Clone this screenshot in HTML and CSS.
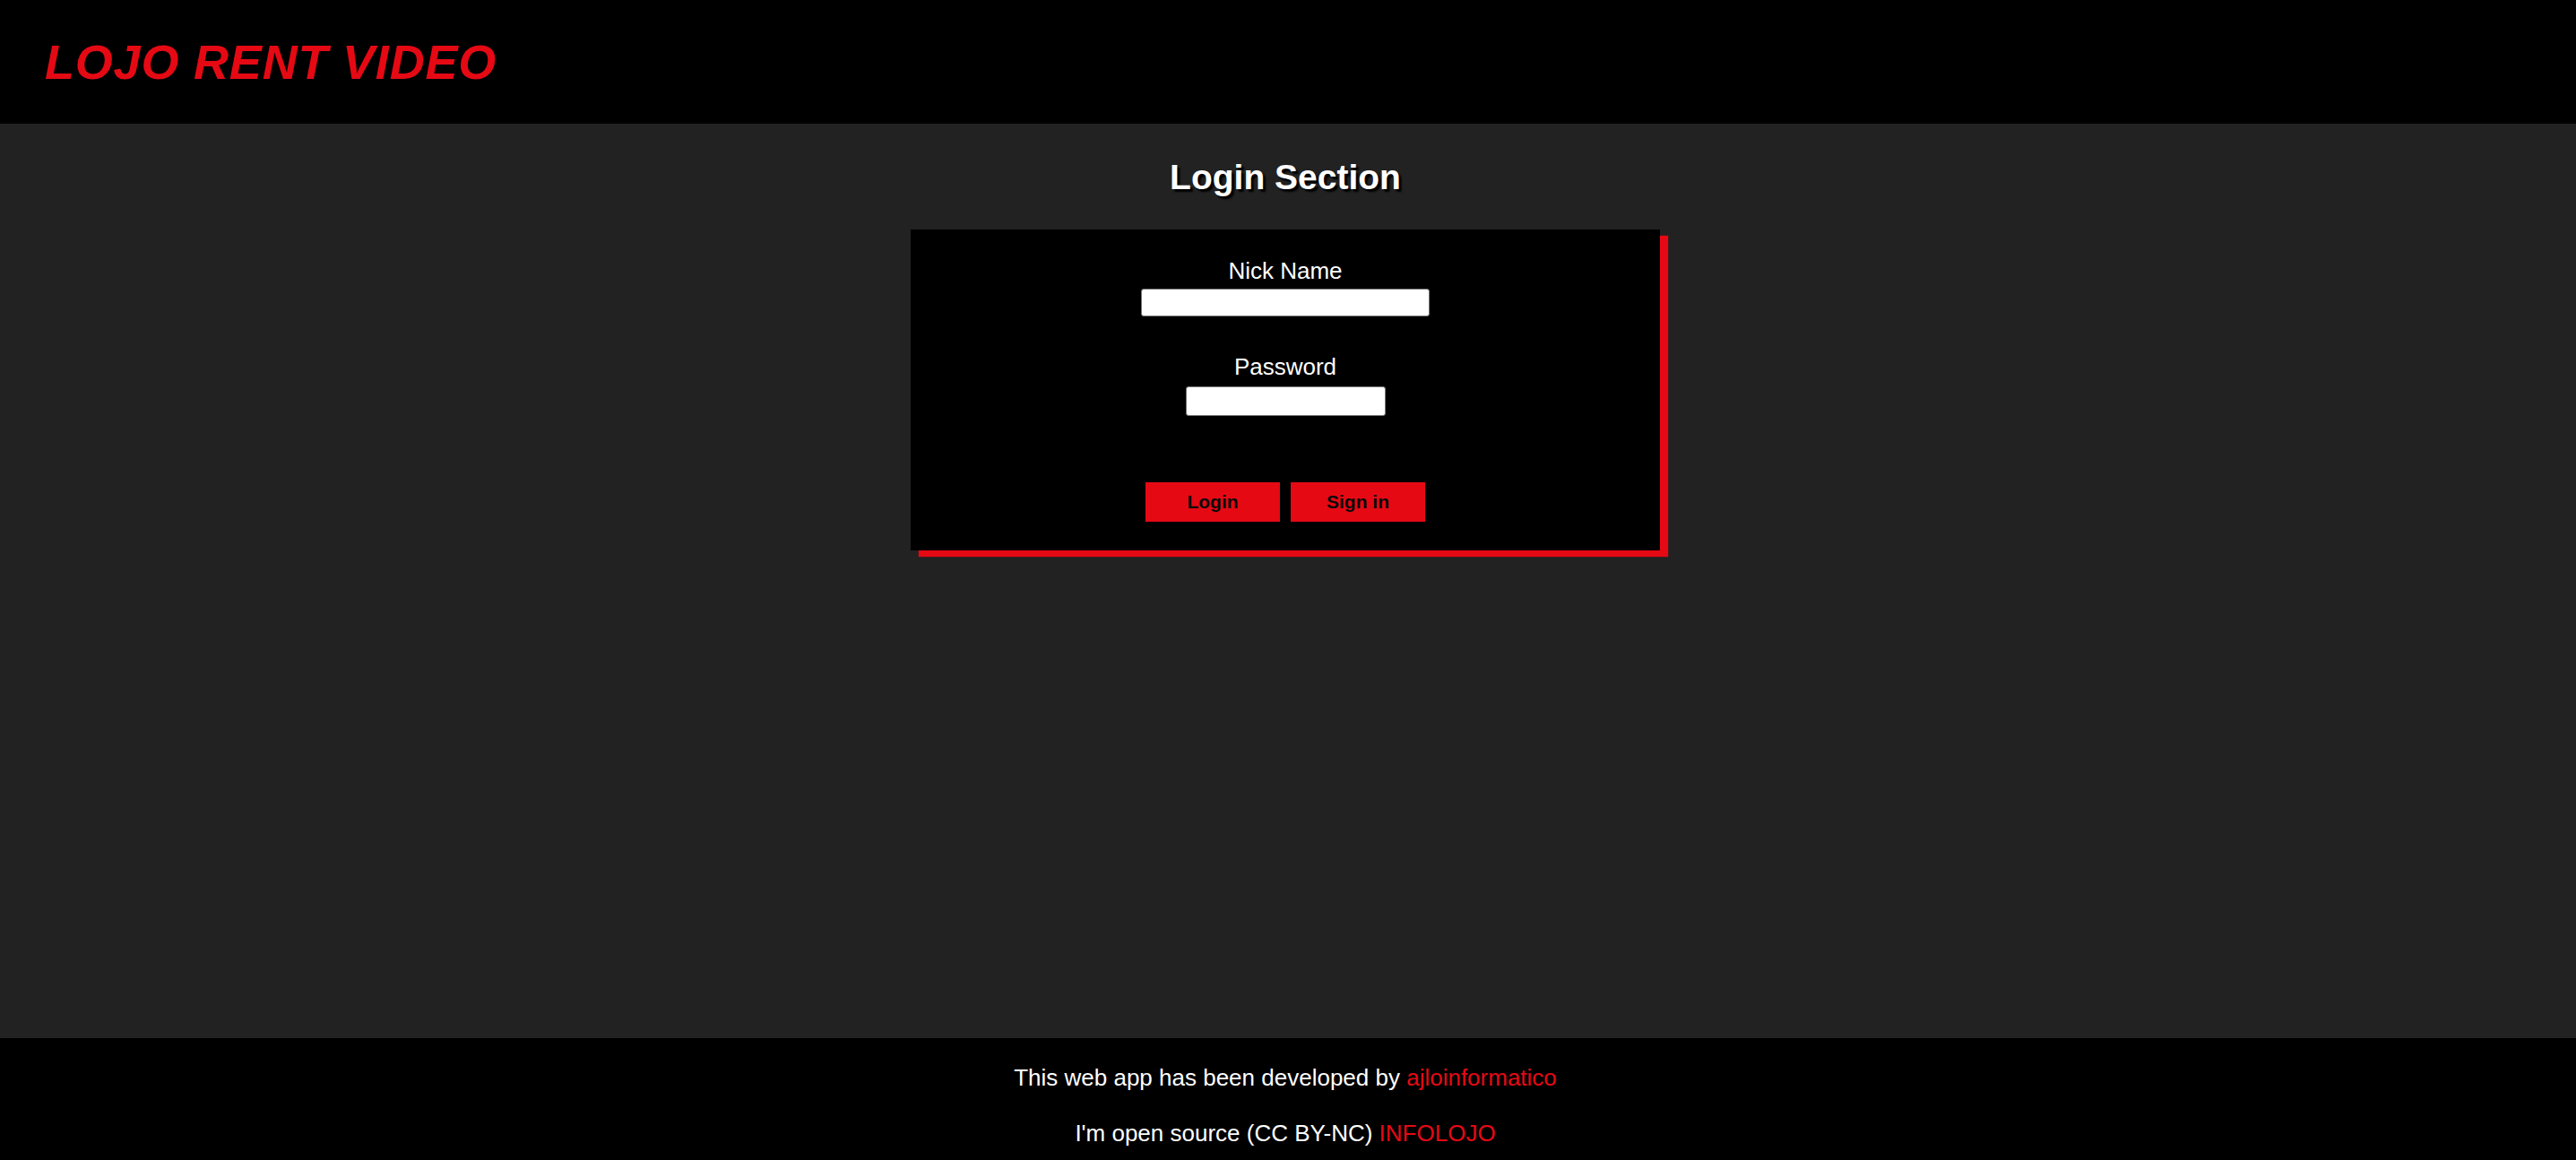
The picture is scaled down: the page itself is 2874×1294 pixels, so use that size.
FILE: index.html
```html
<!DOCTYPE html>
<html lang="en">
<head>
<meta charset="utf-8">
<title>Lojo Rent Video</title>
<link rel="stylesheet" href="styles.css">
</head>
<body>
<div class="page">
  <header class="site-header">
    <h1 class="brand">LOJO RENT VIDEO</h1>
  </header>
  <main class="site-main">
    <h2 class="section-title">Login Section</h2>
    <form class="login-box">
      <label class="field-label" for="nick">Nick Name</label>
      <input class="field-input input-nick" id="nick" type="text">
      <label class="field-label label-pass" for="pass">Password</label>
      <input class="field-input input-pass" id="pass" type="password">
      <div class="actions">
        <button class="btn" type="button">Login</button>
        <button class="btn" type="button">Sign in</button>
      </div>
    </form>
  </main>
  <footer class="site-footer">
    <p class="footer-line">This web app has been developed by <a class="footer-link" href="#">ajloinformatico</a></p>
    <p class="footer-line second">I'm open source (CC BY-NC) <a class="footer-link" href="#">INFOLOJO</a></p>
  </footer>
</div>
</body>
</html>
```

FILE: styles.css
```css
html, body {
  margin: 0;
  padding: 0;
  height: 100%;
  overflow: hidden;
}

body {
  font-family: "Liberation Sans", Arial, Helvetica, sans-serif;
  background: #222222;
  color: #ffffff;
}

.page {
  display: flex;
  flex-direction: column;
  height: 100vh;
}

.site-header {
  height: 138px;
  flex: 0 0 138px;
  background: #000000;
  display: flex;
  align-items: center;
  padding-left: 50px;
}

.brand {
  margin: 0;
  font-size: 54px;
  font-weight: bold;
  font-style: italic;
  letter-spacing: 0.8px;
  line-height: 62px;
  color: #e50914;
}

.site-main {
  flex: 1 1 auto;
  background: #222222;
  display: flex;
  flex-direction: column;
  align-items: center;
  padding-right: 6px;
}

.section-title {
  margin: 37px 0 36px;
  font-size: 39px;
  line-height: 45px;
  font-weight: bold;
  color: #ffffff;
  text-shadow: 3px 3px 2px #000000;
}

.login-box {
  width: 836px;
  height: 358px;
  box-sizing: border-box;
  background: #000000;
  box-shadow: 9px 7px 1px #e50914;
  display: flex;
  flex-direction: column;
  align-items: center;
  padding-top: 31px;
}

.field-label {
  font-size: 26px;
  line-height: 30px;
  color: #ffffff;
}

.label-pass {
  margin-top: 41px;
}

.field-input {
  box-sizing: border-box;
  background: #ffffff;
  border: 1px solid #767676;
  border-radius: 3px;
  padding: 0;
  margin: 0;
}

.input-nick {
  width: 322px;
  height: 31px;
  margin-top: 5px;
}

.input-pass {
  width: 223px;
  height: 33px;
  margin-top: 7px;
}

.actions {
  display: flex;
  gap: 12px;
  margin-top: 74px;
}

.btn {
  width: 150px;
  height: 44px;
  border: none;
  background: #e50914;
  color: #0a0a0a;
  font-family: "Liberation Sans", Arial, Helvetica, sans-serif;
  font-size: 21px;
  font-weight: bold;
  padding: 0;
}

.site-footer {
  height: 136px;
  flex: 0 0 136px;
  box-sizing: border-box;
  background: #000000;
  padding-top: 29px;
  padding-right: 6px;
  text-align: center;
}

.footer-line {
  margin: 0;
  font-size: 26px;
  line-height: 30px;
  color: #ffffff;
}

.footer-line.second {
  margin-top: 32px;
}

.footer-link {
  color: #e50914;
  text-decoration: none;
}
```
